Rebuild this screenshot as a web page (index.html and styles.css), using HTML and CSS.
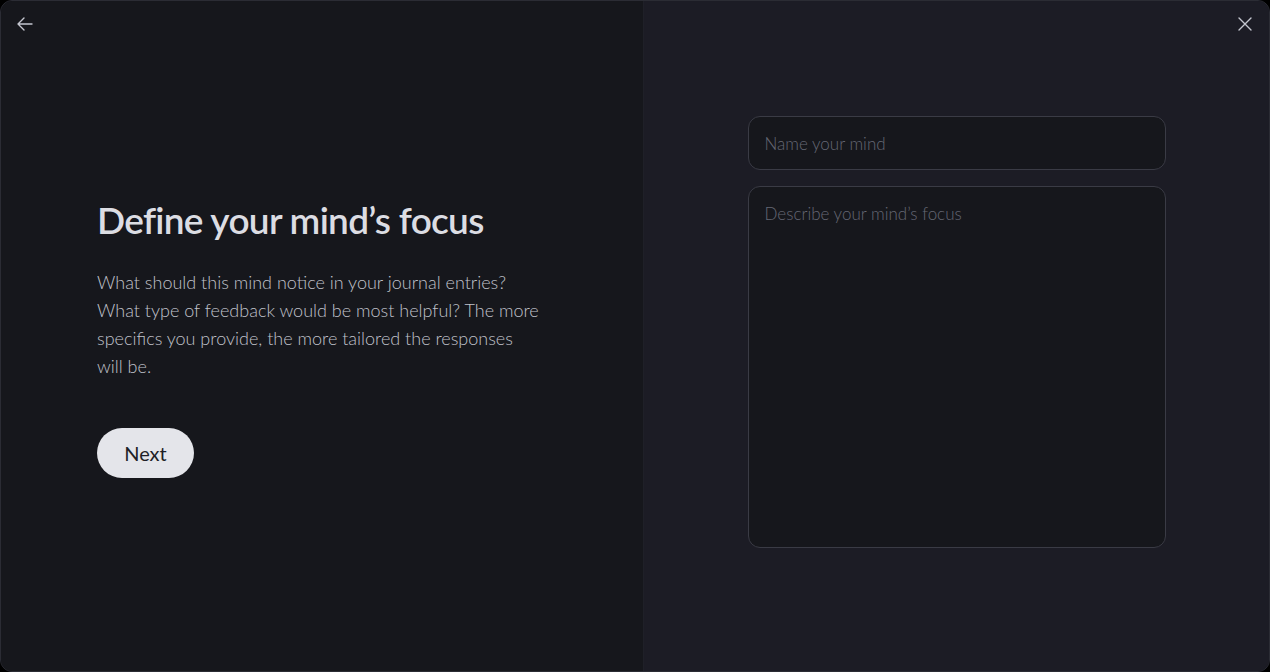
FILE: index.html
```html
<!DOCTYPE html>
<html lang="en">
<head>
<meta charset="utf-8">
<title>Define your mind's focus</title>
<link rel="stylesheet" href="styles.css">
</head>
<body>
<div class="window">
  <section class="left">
    <button class="icon-btn back" aria-label="Back">
      <svg width="18" height="18" viewBox="0 0 18 18" fill="none" stroke="currentColor" stroke-width="1.4" stroke-linecap="round" stroke-linejoin="round"><path d="M16 9H2M8 3L2 9l6 6"/></svg>
    </button>
    <div class="intro">
      <h1 class="title">Define your mind’s focus</h1>
      <p class="desc">What should this mind notice in your journal entries? What type of feedback would be most helpful? The more specifics you provide, the more tailored the responses will be.</p>
      <button class="next">Next</button>
    </div>
  </section>
  <section class="right">
    <button class="icon-btn close" aria-label="Close">
      <svg width="16" height="16" viewBox="0 0 16 16" fill="none" stroke="currentColor" stroke-width="1.4" stroke-linecap="round"><path d="M2 2l12 12M14 2L2 14"/></svg>
    </button>
    <form class="form">
      <input class="field name" type="text" placeholder="Name your mind">
      <textarea class="field focus" placeholder="Describe your mind’s focus"></textarea>
    </form>
  </section>
</div>
</body>
</html>
```

FILE: styles.css
```css
* { box-sizing: border-box; }
html, body { margin: 0; padding: 0; height: 100%; background: #000; }
body { font-family: Lato, "Noto Sans", sans-serif; }

.window {
  height: 672px;
  width: 1270px;
  display: flex;
  border-radius: 12px;
  overflow: hidden;
  border: 1px solid #2b2c34;
  background: #16171c;
}

.left {
  position: relative;
  width: 642px;
  background: #16171c;
  display: flex;
  align-items: center;
  padding-left: 96px;
}
.right {
  position: relative;
  flex: 1;
  background: #1c1c25;
  display: flex;
  align-items: center;
  justify-content: center;
  border-left: 1px solid #1f2028;
}

.icon-btn {
  position: absolute;
  top: 14px;
  background: none;
  border: 0;
  padding: 0;
  width: 18px;
  height: 18px;
  color: #c4c6cf;
  display: flex;
  align-items: center;
  justify-content: center;
}
.back { left: 15px; }
.close { right: 15px; }

.intro {
  width: 450px;
  margin-top: 2px;
}
.title {
  margin: 0 0 24px;
  font-size: 37px;
  font-weight: 600;
  color: #dcdde3;
  letter-spacing: -0.7px;
  line-height: 48px;
}
.desc {
  margin: 0 0 48px;
  font-size: 18px;
  line-height: 28px;
  color: #c0c2cb;
  font-weight: 300;
  width: 443px;
}
.next {
  width: 97px;
  height: 50px;
  border-radius: 25px;
  border: 0;
  background: #e4e5ea;
  color: #1e1f26;
  font-family: inherit;
  font-size: 20px;
  font-weight: 400;
}

.form {
  width: 418px;
  display: flex;
  flex-direction: column;
  gap: 16px;
  margin-top: -8px;
}
.field {
  width: 100%;
  background: #16171c;
  border: 1px solid #3a3b45;
  border-radius: 12px;
  color: #dcdde3;
  font-family: inherit;
  font-size: 17px;
  font-weight: 300;
  padding: 0 16px;
  outline: none;
}
.field::placeholder { color: #656774; }
.name { height: 54px; }
.focus {
  height: 362px;
  padding-top: 16px;
  resize: none;
}
```
